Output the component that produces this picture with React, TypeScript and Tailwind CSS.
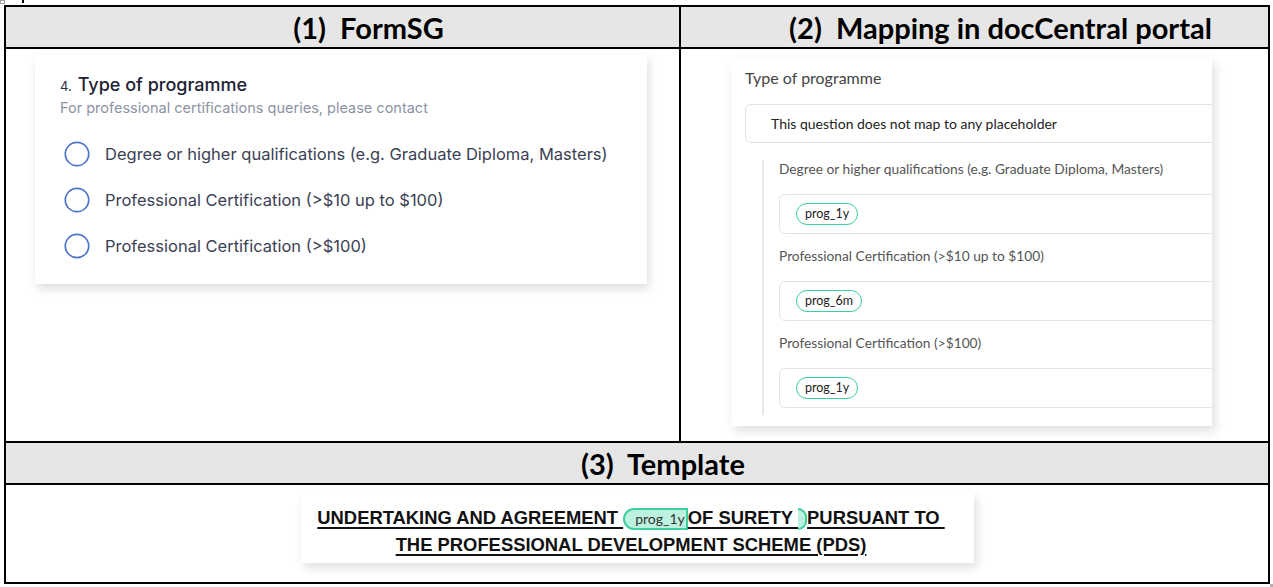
import React from "react";

const formOptions = [
  "Degree or higher qualifications (e.g. Graduate Diploma, Masters)",
  "Professional Certification (>$10 up to $100)",
  "Professional Certification (>$100)",
];

const mappings = [
  { label: "Degree or higher qualifications (e.g. Graduate Diploma, Masters)", tag: "prog_1y" },
  { label: "Professional Certification (>$10 up to $100)", tag: "prog_6m" },
  { label: "Professional Certification (>$100)", tag: "prog_1y" },
];

function HeaderCell({ children, className = "" }: { children: React.ReactNode; className?: string }) {
  return (
    <div
      className={`flex h-[40px] items-center justify-center bg-[#e6e6e6] pl-[52px] font-['Lato',sans-serif] text-[29px] font-bold leading-none whitespace-pre text-black ${className}`}
    >
      {children}
    </div>
  );
}

function Radio() {
  return (
    <svg width="26" height="26" viewBox="0 0 26 26" className="shrink-0">
      <circle cx="13" cy="13" r="11.7" fill="none" stroke="#4d74c9" strokeWidth="1.7" />
    </svg>
  );
}

function FormSgCard() {
  return (
    <div className="ml-[29px] mt-[6px] w-[612px] bg-white pb-[15px] pl-[25px] pt-[18px] font-['Inter',sans-serif] shadow-[2px_5px_9px_rgba(0,0,0,0.13)]">
      <div className="flex items-baseline gap-[6px] leading-[24px]">
        <span className="text-[13px] text-[#2b2f3e]">4.</span>
        <span className="text-[18px] font-medium text-[#1d2133]">Type of programme</span>
      </div>
      <p className="text-[14.5px] leading-[20px] text-[#8d93a4]">
        For professional certifications queries, please contact
      </p>
      <div className="mt-[13px] flex flex-col pl-[4px]">
        {formOptions.map((opt) => (
          <div key={opt} className="flex h-[46px] items-center gap-[15px]">
            <Radio />
            <span className="text-[16.5px] text-[#3b4154]">{opt}</span>
          </div>
        ))}
      </div>
    </div>
  );
}

function Tag({ label }: { label: string }) {
  return (
    <span className="inline-flex h-[22px] items-center rounded-full border-[1.6px] border-[#3ccf9f] px-[8px] text-[12.5px] text-[#222]">
      {label}
    </span>
  );
}

function MappingCard() {
  return (
    <div className="ml-[50px] mt-[9px] h-[368px] w-[481px] overflow-hidden bg-white pl-[14px] pt-[10px] font-['Lato',sans-serif] shadow-[3px_5px_10px_rgba(0,0,0,0.13)]">
      <p className="text-[16px] leading-[20px] text-[#444]">Type of programme</p>
      <div className="mt-[16px] flex h-[39px] w-[520px] items-center rounded-[6px] border border-[#e2e2e2] pl-[25px] text-[14px] text-[#222]">
        This question does not map to any placeholder
      </div>
      <div className="ml-[17px] mt-[17px] border-l-2 border-[#e8e8e8] pb-[7px] pl-[15px]">
        {mappings.map((m, i) => (
          <div key={i} className={i > 0 ? "mt-[13px]" : ""}>
            <p className="h-[18px] text-[13.75px] leading-[18px] text-[#555]">{m.label}</p>
            <div className="mt-[16px] flex h-[40px] w-[520px] items-center rounded-[6px] border border-[#e4e4e4] pl-[16px]">
              <Tag label={m.tag} />
            </div>
          </div>
        ))}
      </div>
    </div>
  );
}

function TemplateCard() {
  const u = "underline decoration-[1.5px] underline-offset-[3px]";
  return (
    <div className="mx-auto mt-[7px] h-[71px] w-[673px] bg-white pr-[12px] pt-[12px] text-center font-['Liberation_Sans',Arial,sans-serif] text-[18.4px] font-bold leading-[27px] text-[#111] shadow-[3px_5px_9px_rgba(0,0,0,0.12)]">
      <p>
        <span className={u}>UNDERTAKING AND AGREEMENT&nbsp;</span>
        <span className="inline-flex h-[22px] items-center rounded-l-full border-2 border-[#3ccf9f] bg-[#bdf1df] pl-[10px] pr-[1px] align-middle font-['Lato',sans-serif] text-[14px] font-normal leading-none text-[#333]">
          prog_1y
        </span>
        <span className={u}>OF SURETY&nbsp;</span>
        <span className="inline-block h-[22px] w-[9px] rounded-r-full border-2 border-l-0 border-[#3ccf9f] bg-[#bdf1df] align-middle" />
        <span className={u}>PURSUANT TO&nbsp;</span>
      </p>
      <p>
        <span className={u}>THE PROFESSIONAL DEVELOPMENT SCHEME (PDS)</span>
      </p>
    </div>
  );
}

export default function App() {
  return (
    <div className="relative h-[587px] w-[1273px] bg-white pl-[4px] pt-[5px]">
      {/* word table handles */}
      <div className="absolute left-0 top-0 h-[4px] w-[5px] border border-[#a0a0a0]" />
      <div className="absolute left-[22px] top-0 h-[3px] w-[2px] bg-black" />
      <div className="absolute left-[1270px] top-[584px] h-[3px] w-[3px] bg-[#b0b0b0]" />

      <div className="flex w-[1266px] flex-col border-2 border-black">
        <div className="flex border-b-2 border-black">
          <HeaderCell className="w-[673px]">{"(1)  FormSG"}</HeaderCell>
          <div className="w-[2px] bg-black" />
          <HeaderCell className="flex-1">{"(2)  Mapping in docCentral portal"}</HeaderCell>
        </div>

        <div className="flex h-[394px] border-b-2 border-black">
          <div className="w-[673px]">
            <FormSgCard />
          </div>
          <div className="w-[2px] bg-black" />
          <div className="flex-1">
            <MappingCard />
          </div>
        </div>

        <HeaderCell className="border-b-2 border-black !h-[42px]">{"(3)  Template"}</HeaderCell>

        <div className="h-[97px]">
          <TemplateCard />
        </div>
      </div>
    </div>
  );
}
